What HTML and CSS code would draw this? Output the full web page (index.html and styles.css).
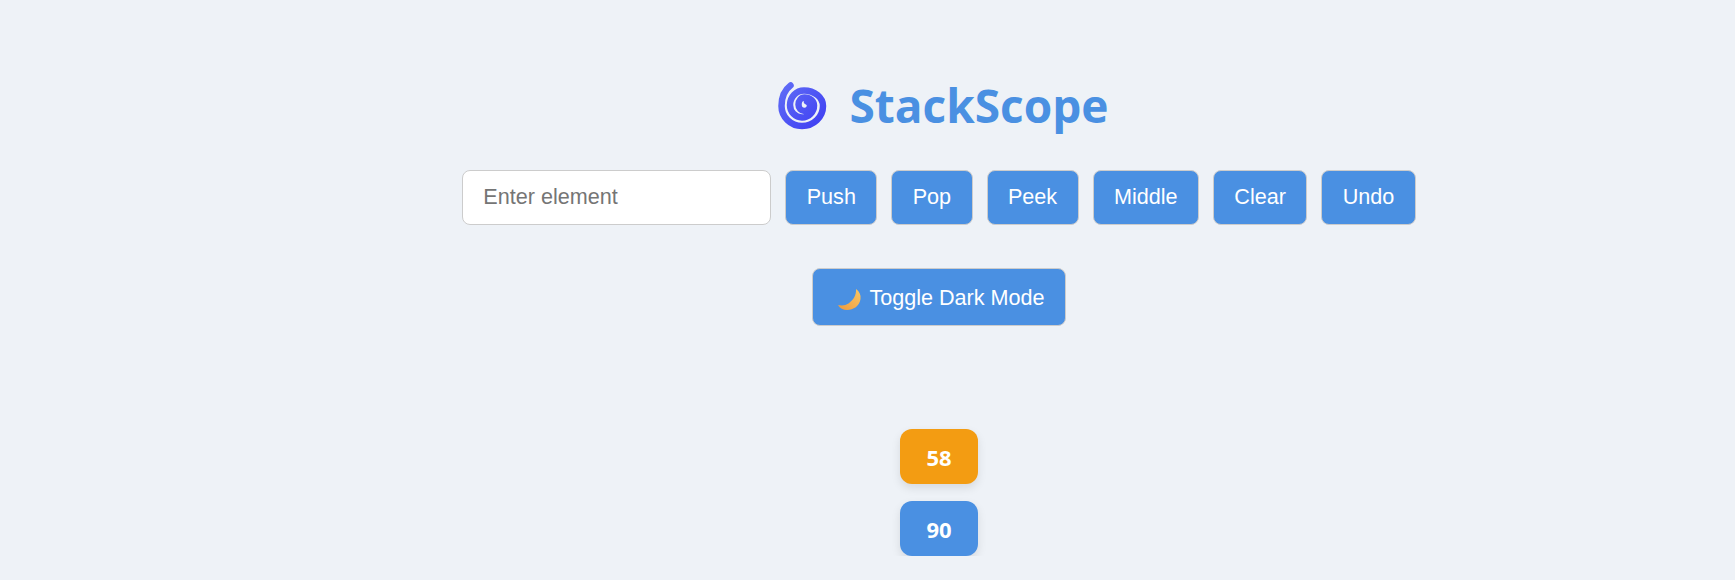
FILE: index.html
```html
<!DOCTYPE html>
<html lang="en">
<head>
    <meta charset="UTF-8">
    <meta name="viewport" content="width=device-width, initial-scale=1.0">
    <title>StackScope</title>
    <link rel="stylesheet" href="styles.css">
</head>
<body>
    <main class="app">
        <h1 class="title">
            <svg class="title-icon" viewBox="0 0 60 60" aria-hidden="true">
                <defs>
                    <linearGradient id="swirl" x1="0" y1="0" x2="1" y2="1">
                        <stop offset="0" stop-color="#5f6cf6"/>
                        <stop offset="1" stop-color="#3f3ff2"/>
                    </linearGradient>
                </defs>
                <path class="swirl-path" d="M21.5 9.5C15.500 14 12.500 21 12.500 30A20.500 20 0 0 0 33 50A21 20 0 0 0 54 30A19 15.500 0 0 0 35 14.500A14 14.500 0 0 0 21 29A12 12.500 0 0 0 33 41.500A12 12 0 0 0 45 29.500A9.500 8 0 0 0 35.500 21.500A6 7 0 0 0 29.500 28.500A6 6.500 0 0 0 35.500 35A5.500 6 0 0 0 41 29A5 4.500 0 0 0 38 25.500"/>
            </svg>
            <span>StackScope</span>
        </h1>

        <div class="controls">
            <input class="element-input" type="text" placeholder="Enter element">
            <button class="btn">Push</button>
            <button class="btn">Pop</button>
            <button class="btn">Peek</button>
            <button class="btn">Middle</button>
            <button class="btn">Clear</button>
            <button class="btn">Undo</button>
        </div>

        <button class="btn toggle">
            <svg class="moon" viewBox="0 0 29 29" aria-hidden="true">
                <defs>
                    <linearGradient id="moon-fill" x1="1" y1="0" x2="0" y2="1">
                        <stop offset="0" stop-color="#f9c765"/>
                        <stop offset="1" stop-color="#ee9a3e"/>
                    </linearGradient>
                </defs>
                <path d="M23 5C26.500 7.500 28 11 27.500 15C26.500 22 20.500 26 14 26C10 26 7 24.500 5 21C9 22 12.500 21.500 15.500 19.500C20.500 16 23.500 11 23 5Z" fill="url(#moon-fill)"/>
            </svg>
            Toggle Dark Mode
        </button>

        <div class="stack">
            <div class="stack-item top">58</div>
            <div class="stack-item">90</div>
        </div>
    </main>
</body>
</html>
```

FILE: styles.css
```css
body {
    margin: 0;
    background-color: #eef2f7;
    font-family: 'Liberation Sans', Arial, sans-serif;
}
.app {
    display: flex;
    flex-direction: column;
    align-items: center;
    padding: 68px 0 0 143px;
}
.title {
    display: flex;
    align-items: center;
    gap: 20px;
    margin: 0 0 29px;
    height: 73px;
    font-family: 'Open Sans', sans-serif;
    font-size: 46px;
    font-weight: 700;
    color: #4a90e2;
}
.title-icon {
    width: 60px;
    height: 60px;
    margin-top: 2px;
}
.swirl-path {
    fill: none;
    stroke: url(#swirl);
    stroke-width: 6.5;
    stroke-linecap: round;
}
.controls {
    display: flex;
    gap: 14px;
}
.element-input {
    box-sizing: border-box;
    width: 309px;
    height: 55px;
    padding: 0 20px 2px;
    border: 1px solid #ccc;
    border-radius: 8px;
    background-color: #fff;
    font-family: inherit;
    font-size: 21.6px;
}
.element-input::placeholder {
    color: #757575;
}
.btn {
    box-sizing: border-box;
    height: 55px;
    padding: 0 20.4px 2px;
    border: 1px solid #ccc;
    border-radius: 8px;
    background-color: #4a90e2;
    color: #fff;
    font-family: inherit;
    font-size: 21.6px;
}
.toggle {
    display: flex;
    align-items: center;
    gap: 7px;
    height: 58px;
    margin-top: 43px;
    padding: 2px 20px 0;
}
.moon {
    width: 29px;
    height: 29px;
}
.stack {
    display: flex;
    flex-direction: column;
    gap: 17px;
    margin-top: 103px;
}
.stack-item {
    display: flex;
    align-items: center;
    justify-content: center;
    width: 78px;
    height: 55px;
    border-radius: 12px;
    background-color: #4a90e2;
    box-shadow: 0 4px 10px rgba(0, 0, 0, 0.1);
    color: #fff;
    font-family: 'Open Sans', sans-serif;
    font-size: 22px;
    font-weight: 700;
}
.stack-item.top {
    background-color: #f39c12;
}
```
